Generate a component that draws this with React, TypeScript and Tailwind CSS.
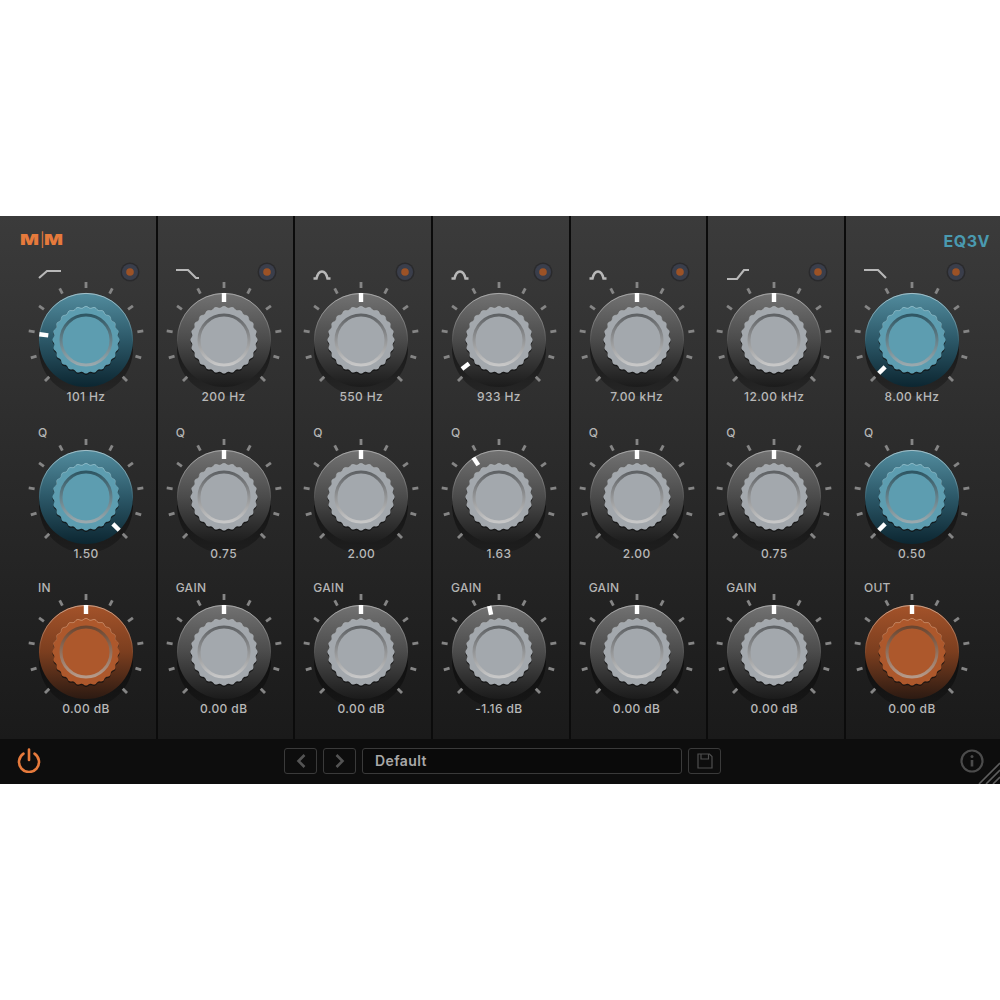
const FONT = "font-['Inter','Liberation_Sans',sans-serif]";

type Tone = "grey" | "teal" | "orange";

const tones = {
  grey: {
    top: "#727272", mid: "#4b4b4b", bottom: "#1b1b1b", rim: "#a8a8a8",
    cap: "#a3a8ad", edge: "#b4b8bb", ringTop: "#5f6265", ringBottom: "#c8c8c8",
  },
  teal: {
    top: "#528c9e", mid: "#2c5868", bottom: "#0c2631", rim: "#a5c0c8",
    cap: "#5d9db0", edge: "#a9d0da", ringTop: "#2f5764", ringBottom: "#9aa9ae",
  },
  orange: {
    top: "#a4532a", mid: "#7b3e1f", bottom: "#2c1a12", rim: "#c9a48e",
    cap: "#ad582c", edge: "#dca988", ringTop: "#6b4630", ringBottom: "#b59a8a",
  },
};

// bumpy edge of the grip, 24 lobes
const gripPath = (() => {
  const pts: string[] = [];
  for (let i = 0; i < 288; i++) {
    const a = (i / 288) * Math.PI * 2;
    const r = 32.8 + 0.8 * Math.cos(a * 24);
    pts.push(`${(Math.sin(a) * r).toFixed(2)} ${(-Math.cos(a) * r).toFixed(2)}`);
  }
  return `M${pts.join("L")}Z`;
})();

const tickAngles = [-135, -108, -81, -54, -27, 0, 27, 54, 81, 108, 135];

const Knob = ({tone, angle}: {tone: Tone; angle: number}) => {
  const c = tones[tone];
  return (
    <svg width="124" height="124" viewBox="-62 -62 124 124" className="block">
      <defs>
        <linearGradient id={`body-${tone}`} x1="0" y1="0" x2="0" y2="1">
          <stop offset="0" stopColor={c.top} />
          <stop offset="0.5" stopColor={c.mid} />
          <stop offset="1" stopColor={c.bottom} />
        </linearGradient>
        <linearGradient id={`rim-${tone}`} x1="0" y1="0" x2="0" y2="1">
          <stop offset="0" stopColor={c.rim} />
          <stop offset="0.55" stopColor={c.rim} stopOpacity="0" />
        </linearGradient>
        <linearGradient id={`edge-${tone}`} x1="0" y1="0" x2="0" y2="1">
          <stop offset="0" stopColor={c.edge} />
          <stop offset="0.5" stopColor={c.edge} stopOpacity="0" />
        </linearGradient>
        <linearGradient id={`ring-${tone}`} x1="0" y1="0" x2="0" y2="1">
          <stop offset="0" stopColor={c.ringTop} />
          <stop offset="1" stopColor={c.ringBottom} />
        </linearGradient>
        <linearGradient id={`shade-${tone}`} x1="0" y1="0" x2="0" y2="1">
          <stop offset="0.5" stopColor="#000" stopOpacity="0.5" />
          <stop offset="1" stopColor="#000" stopOpacity="0.2" />
        </linearGradient>
      </defs>
      <circle cx="0" cy="9" r="47" fill={`url(#shade-${tone})`} />
      {tickAngles.map((a) => (
        <line key={a} x1="0" y1="-52" x2="0" y2="-58" stroke="#858585" strokeWidth="2.8" transform={`rotate(${a})`} />
      ))}
      <circle r="47" fill={`url(#body-${tone})`} />
      <circle r="46.6" fill="none" stroke={`url(#rim-${tone})`} strokeWidth="1" />
      <path d={gripPath} transform="translate(0 1.4)" fill="#101010" opacity="0.75" />
      <path d={gripPath} fill={c.cap} stroke={`url(#edge-${tone})`} strokeWidth="0.7" />
      <circle r="25" fill={c.cap} stroke={`url(#ring-${tone})`} strokeWidth="3" />
      <rect x="-2.2" y="-47" width="4.4" height="9" fill="#fff" transform={`rotate(${angle})`} />
    </svg>
  );
};

const Led = () => (
  <svg width="20" height="20" viewBox="0 0 20 20" className="block">
    <circle cx="10" cy="10" r="9.5" fill="#2a2a2c" />
    <circle cx="10" cy="10" r="8" fill="#3a3e4b" />
    <circle cx="10" cy="10" r="3.8" fill="#9c5226" />
  </svg>
);

const curves: Record<string, string> = {
  lowUp: "M1 9 L9 2 H23",
  highDown: "M0 1 H12 L20 9 H23",
  bell: "M0.5 9.5 H3.5 C4.5 5 6 2.5 9 2.5 C12 2.5 13.5 5 14.5 9.5 H17.5",
  highUp: "M1 10 H11 L18 1 H23",
  lowDown: "M0 1 H14 L22 9",
};

const CurveIcon = ({type}: {type: string}) => (
  <svg width="24" height="12" viewBox="0 0 24 12" fill="none" className="block">
    <path d={curves[type]} stroke="#b8b8b8" strokeWidth={type === "bell" ? 2.5 : 2.1} />
  </svg>
);

type Dial = {label?: string; value: string; tone: Tone; angle: number};

type Column = {curve: string; dials: Dial[]};

const columns: Column[] = [
  {curve: "lowUp", dials: [
    {value: "101 Hz", tone: "teal", angle: -83},
    {label: "Q", value: "1.50", tone: "teal", angle: 135},
    {label: "IN", value: "0.00 dB", tone: "orange", angle: 0},
  ]},
  {curve: "highDown", dials: [
    {value: "200 Hz", tone: "grey", angle: 0},
    {label: "Q", value: "0.75", tone: "grey", angle: 0},
    {label: "GAIN", value: "0.00 dB", tone: "grey", angle: 0},
  ]},
  {curve: "bell", dials: [
    {value: "550 Hz", tone: "grey", angle: 0},
    {label: "Q", value: "2.00", tone: "grey", angle: 0},
    {label: "GAIN", value: "0.00 dB", tone: "grey", angle: 0},
  ]},
  {curve: "bell", dials: [
    {value: "933 Hz", tone: "grey", angle: -128},
    {label: "Q", value: "1.63", tone: "grey", angle: -33},
    {label: "GAIN", value: "-1.16 dB", tone: "grey", angle: -12},
  ]},
  {curve: "bell", dials: [
    {value: "7.00 kHz", tone: "grey", angle: 0},
    {label: "Q", value: "2.00", tone: "grey", angle: 0},
    {label: "GAIN", value: "0.00 dB", tone: "grey", angle: 0},
  ]},
  {curve: "highUp", dials: [
    {value: "12.00 kHz", tone: "grey", angle: 0},
    {label: "Q", value: "0.75", tone: "grey", angle: 0},
    {label: "GAIN", value: "0.00 dB", tone: "grey", angle: 0},
  ]},
  {curve: "lowDown", dials: [
    {value: "8.00 kHz", tone: "teal", angle: -135},
    {label: "Q", value: "0.50", tone: "teal", angle: -135},
    {label: "OUT", value: "0.00 dB", tone: "orange", angle: 0},
  ]},
];

const DialBlock = ({dial, first}: {dial: Dial; first: boolean}) => (
  <div className={first ? "h-[148px]" : "h-[155px]"}>
    {dial.label ? (
      <div className="h-[14px] pl-[18px] text-xs leading-[14px] font-medium tracking-[0.3px] text-[#b4b4b4]">{dial.label}</div>
    ) : null}
    <div className={first ? "-mt-[2px] pl-1" : "-mt-[5px] pl-1"}>
      <Knob tone={dial.tone} angle={dial.angle} />
    </div>
    <div className="-mt-[12px] w-[132px] text-center text-xs leading-[14px] font-medium tracking-[0.4px] text-[#b8b8b8]">{dial.value}</div>
  </div>
);

export default function App() {
  return (
    <div className={`flex h-[1000px] flex-col justify-center bg-white ${FONT}`}>
      <div className="relative h-[568px] overflow-hidden">
        <div className="flex h-[523px] bg-gradient-to-b from-[#3b3b3b] to-[#1a1a1a]">
          {columns.map((col, i) => (
            <div
              key={i}
              className={
                i === 0
                  ? "w-[157.67px] shrink-0 border-r-2 border-[#0b0b0b] pl-5"
                  : i === 6
                  ? "flex-1"
                  : "w-[137.67px] shrink-0 border-r-2 border-[#0b0b0b]"
              }
            >
              <div className="h-[48px]">
                {i === 0 ? (
                  <div className="flex h-[48px] items-start pt-[15px] text-[14px] leading-[18px] font-black text-[#e67a3c]">
                    <span className="inline-block w-[20px] origin-left scale-x-[1.42]">M</span>
                    <span className="w-[4px] text-center font-normal">|</span>
                    <span className="inline-block w-[18px] origin-left scale-x-[1.42]">M</span>
                  </div>
                ) : null}
                {i === 6 ? (
                  <div className="pt-[15px] pr-[10px] text-right text-base leading-[20px] font-bold tracking-[0.5px] text-[#4a9ab0]">EQ3V</div>
                ) : null}
              </div>
              <div className="flex h-[16px] w-[135.67px] items-start justify-between pr-4 pl-[18px]">
                <div className="mt-[5px]"><CurveIcon type={col.curve} /></div>
                <div className="-mt-[2px]"><Led /></div>
              </div>
              {col.dials.map((dial, j) => (
                <DialBlock key={j} dial={dial} first={j === 0} />
              ))}
            </div>
          ))}
        </div>
        <div className="flex h-[45px] items-center bg-[#0d0d0d]">
          <svg width="26" height="26" viewBox="0 0 26 26" fill="none" className="-mt-[4px] ml-4 block shrink-0">
            <path d="M13 2.5 V13" stroke="#e67a3c" strokeWidth="2.6" strokeLinecap="round" />
            <path d="M7.5 6.6 A10 10 0 1 0 18.5 6.6" stroke="#e67a3c" strokeWidth="2.6" strokeLinecap="round" />
          </svg>
          <div className="-mt-[2px] ml-[242px] flex gap-[6px]">
            <button className="flex h-[26px] w-[33px] items-center justify-center rounded-[3px] border border-[#3a3a3a]">
              <svg width="12" height="16" viewBox="0 0 12 16" fill="none">
                <path d="M9.5 2 L3.5 8 L9.5 14" stroke="#545454" strokeWidth="2.6" />
              </svg>
            </button>
            <button className="flex h-[26px] w-[33px] items-center justify-center rounded-[3px] border border-[#3a3a3a]">
              <svg width="12" height="16" viewBox="0 0 12 16" fill="none">
                <path d="M2.5 2 L8.5 8 L2.5 14" stroke="#545454" strokeWidth="2.6" />
              </svg>
            </button>
            <div className="flex h-[26px] w-[320px] items-center rounded-[3px] border border-[#3a3a3a] bg-[#0a0a0a] pl-[12px] text-sm font-semibold tracking-[0.4px] text-[#a8a8a8]">Default</div>
            <button className="flex h-[26px] w-[33px] items-center justify-center rounded-[3px] border border-[#3a3a3a]">
              <svg width="16" height="16" viewBox="0 0 16 16" fill="none">
                <path d="M1 1 H12.5 L15 3.5 V15 H1 Z" stroke="#4e4e4e" strokeWidth="1.2" />
                <path d="M4 1 V6 H11.5 V1" stroke="#4e4e4e" strokeWidth="1.2" />
              </svg>
            </button>
          </div>
          <svg width="24" height="24" viewBox="0 0 24 24" fill="none" className="-mt-[1px] mr-4 ml-auto block shrink-0">
            <circle cx="12" cy="12" r="10.5" stroke="#4b4b4b" strokeWidth="2.2" />
            <circle cx="12" cy="7.6" r="1.5" fill="#4b4b4b" />
            <path d="M12 11 V17.5" stroke="#4b4b4b" strokeWidth="2.6" />
          </svg>
        </div>
        {/* resize grip in the corner */}
        <svg width="22" height="22" viewBox="0 0 22 22" fill="none" className="absolute right-0 bottom-0 block">
          <path d="M1 22 L22 1 M8 22 L22 8 M15 22 L22 15" stroke="#5e5e5e" strokeWidth="1.6" />
        </svg>
      </div>
    </div>
  );
}
